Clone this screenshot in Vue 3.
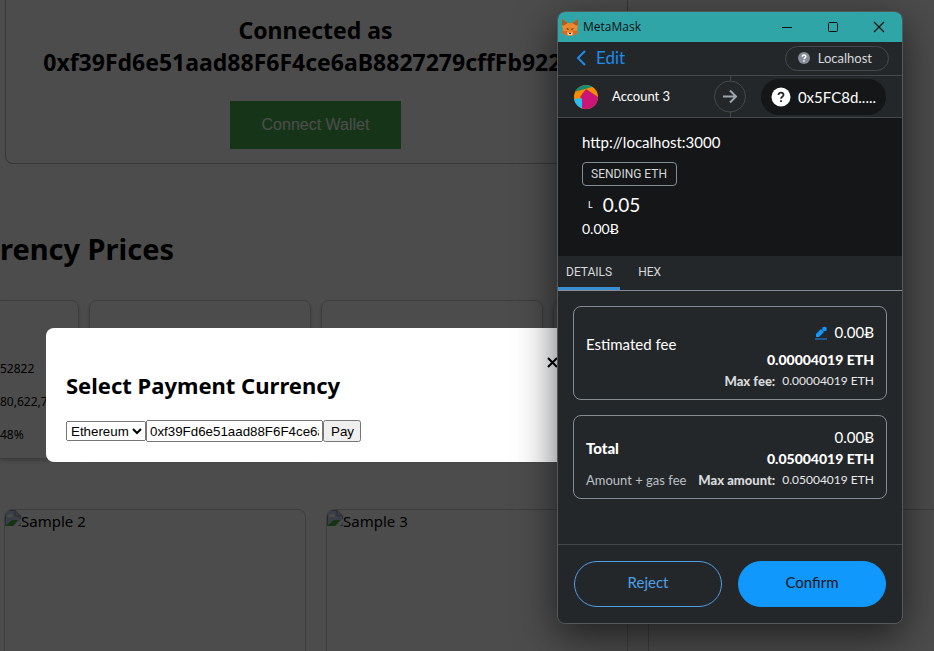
<script setup>
import { ref } from 'vue'

const address = ref('0xf39Fd6e51aad88F6F4ce6aB8827279cffFb92266')
const currency = ref('Ethereum')
const currencies = ['Ethereum', 'Bitcoin']
const samples = ['Sample 2', 'Sample 3', '']
</script>

<template>
  <div class="screen">
    <main class="page">
      <section class="connect">
        <h2>Connected as<br />{{ address }}</h2>
        <button class="wallet" type="button">Connect Wallet</button>
      </section>

      <h1>rency Prices</h1>

      <section class="prices">
        <article class="price first">
          <p>52822</p>
          <p>80,622,7</p>
          <p>48%</p>
        </article>
        <article class="price"></article>
        <article class="price"></article>
        <article class="price"></article>
      </section>

      <section class="samples">
        <figure v-for="(name, i) in samples" :key="i" class="sample">
          <svg v-if="name" width="16" height="16" viewBox="0 0 16 16" aria-hidden="true">
            <path d="M0 0h10l6 6v10H0z" fill="#c3d4ee" />
            <path d="M0 16l7-6h6l-5 6z" fill="#4caf3d" />
            <path d="M9 16l7-7v3l-3 4z" fill="#fff" />
            <path d="M3 7c-2-1 0-3 1-2 1-2 4-1 3 1 2 0 1 1 0 1z" fill="#fff" />
            <path d="M.5 16V.5H10l5.500 5.500V9M10 .5V6h5.500M13 15.500h3" fill="none" stroke="#8a8f98" />
          </svg>
          <figcaption>{{ name }}</figcaption>
        </figure>
      </section>
    </main>

    <div class="overlay">
      <section class="modal">
        <button class="close" type="button" aria-label="Close">
          <svg width="11" height="11" viewBox="0 0 11 11"><path d="M1 1l9 9M10 1l-9 9" stroke="#000" stroke-width="2" /></svg>
        </button>
        <h2>Select Payment Currency</h2>
        <form class="pay" @submit.prevent>
          <select v-model="currency" aria-label="Currency">
            <option v-for="c in currencies" :key="c">{{ c }}</option>
          </select>
          <input v-model="address" type="text" aria-label="Address" />
          <button type="submit">Pay</button>
        </form>
      </section>
    </div>

    <section class="popup">
      <header class="titlebar">
        <svg class="fox" width="18" height="18" viewBox="0 0 18 18" aria-hidden="true">
          <path d="M1 1l6 4h4l6-4v7l-1 4 1 3-4 2-3 1H8l-3-1-4-2 1-3-1-4z" fill="#e8862d" />
          <path d="M1 1l6 4-4 3-2-1zM17 1l-6 4 4 3 2-1z" fill="#a4602f" />
          <path d="M2 8l5-3 1 5-6 2zM16 8l-5-3-1 5 6 2z" fill="#f08a2e" />
          <path d="M1 13h5l1 3-2 1-4-2zM17 13h-5l-1 3 2 1 4-2z" fill="#d9691f" />
          <path d="M5 10l3 1-1 1zM13 10l-3 1 1 1z" fill="#3b2a22" />
          <path d="M6 14l1 3h4l1-3-2 1H8z" fill="#e6d6c6" />
          <path d="M8 15h2v1H8z" fill="#24272a" />
        </svg>
        <span class="name">MetaMask</span>
        <div class="controls">
          <button type="button" aria-label="Minimize"><svg width="12" height="12" viewBox="0 0 12 12"><path d="M1 6.500h10" stroke="#111" /></svg></button>
          <button type="button" aria-label="Maximize"><svg width="12" height="12" viewBox="0 0 12 12"><rect x="1.500" y="1.500" width="9" height="9" rx="1" fill="none" stroke="#111" /></svg></button>
          <button type="button" aria-label="Close window"><svg width="12" height="12" viewBox="0 0 12 12"><path d="M1 1l10 10M11 1L1 11" stroke="#111" stroke-width="1.200" /></svg></button>
        </div>
      </header>

      <div class="editbar">
        <a href="#" class="edit">
          <svg width="10" height="16" viewBox="0 0 10 16" aria-hidden="true"><path d="M9 1L2 8l7 7" fill="none" stroke="#1c8ceb" stroke-width="2" /></svg>
          Edit
        </a>
        <span class="network">
          <svg width="12" height="12" viewBox="0 0 12 12" aria-hidden="true">
            <circle cx="6" cy="6" r="6" fill="#868d99" />
            <path d="M4.300 4.700C4.300 2.500 7.900 2.500 7.800 4.600 7.700 5.900 6 5.700 6 7.200M6 8.200v1.500" fill="none" stroke="#fff" stroke-width="1.500" />
          </svg>
          Localhost
        </span>
      </div>

      <div class="accounts">
        <div class="from">
          <svg width="24" height="24" viewBox="0 0 24 24" aria-hidden="true">
            <defs><clipPath id="jazz"><circle cx="12" cy="12" r="12" /></clipPath></defs>
            <g clip-path="url(#jazz)">
              <path d="M0 0h24v24H0z" fill="#f98c01" />
              <path d="M0 7L18 2V0H0z" fill="#178b72" />
              <path d="M0 14l8-1v11H0z" fill="#24c1f2" />
              <path d="M12 4l12 8v12H8V14L6 12z" fill="#cb1577" />
            </g>
          </svg>
          <span>Account 3</span>
        </div>
        <svg class="arrow" width="34" height="41" viewBox="0 0 34 41" aria-hidden="true">
          <path d="M17.500 0v5M17.500 36v5" stroke="#44484c" />
          <circle cx="17" cy="20.500" r="15.500" fill="none" stroke="#44484c" />
          <path d="M10 20.500h13M17 14.500l6 6-6 6" fill="none" stroke="#9fa6ae" stroke-width="2" />
        </svg>
        <span class="to">
          <svg width="20" height="20" viewBox="0 0 20 20" aria-hidden="true">
            <circle cx="10" cy="10" r="9.500" fill="#fff" />
            <path d="M7.500 8C7.500 4.700 12.700 4.900 12.500 8 12.400 9.900 10 9.600 10 11.800M10 13.200v1.800" fill="none" stroke="#24272a" stroke-width="1.800" />
          </svg>
          0x5FC8d.....
        </span>
      </div>

      <div class="summary">
        <div class="origin">http://localhost:3000</div>
        <div class="action">SENDING ETH</div>
        <div class="amount"><small>L</small>0.05</div>
        <div class="fiat">0.00Ƀ</div>
      </div>

      <nav class="tabs">
        <button class="tab active" type="button">DETAILS</button>
        <button class="tab" type="button">HEX</button>
      </nav>

      <div class="details">
        <section class="box fee">
          <span class="label">Estimated fee</span>
          <div class="values">
            <div class="value">
              <svg width="13" height="14" viewBox="0 0 13 14" aria-hidden="true">
                <path d="M0 13h12" stroke="#1c6db0" stroke-width="1.500" />
                <path d="M1 11V8l5-5 3 3-5 5z" fill="#1098fc" />
                <circle cx="9.500" cy="3" r="2.300" fill="#1098fc" />
              </svg>
              0.00Ƀ
            </div>
            <div class="strong">0.00004019 ETH</div>
            <div class="max"><b>Max fee:</b><span>0.00004019 ETH</span></div>
          </div>
        </section>
        <section class="box total">
          <div class="side">
            <strong>Total</strong>
            <span>Amount + gas fee</span>
          </div>
          <div class="values">
            <div class="value">0.00Ƀ</div>
            <div class="strong">0.05004019 ETH</div>
            <div class="max"><b>Max amount:</b><span>0.05004019 ETH</span></div>
          </div>
        </section>
      </div>

      <footer class="actions">
        <button class="reject" type="button">Reject</button>
        <button class="confirm" type="button">Confirm</button>
      </footer>
    </section>
  </div>
</template>

<style>
body {
  background: #4d4d4d;
}
</style>

<style scoped>
* {
  box-sizing: border-box;
}
.screen {
  position: relative;
  height: 100vh;
  overflow: hidden;
  background: #fff;
  color: #000;
  font-family: "Noto Sans", "Open Sans", sans-serif;
  font-size: 15px;
}
h1,
h2,
p,
figure {
  margin: 0;
}
h2 {
  font-size: 23px;
  line-height: 32px;
}
.connect {
  display: flex;
  flex-direction: column;
  align-items: center;
  gap: 23px;
  width: 623px;
  margin-left: 5px;
  padding: 14px 20px 14px 18px;
  border: 1px solid #bbb;
  border-top: 0;
  border-radius: 0 0 8px 8px;
  text-align: center;
}
.wallet {
  padding: 15px 32px;
  border: 0;
  background: #4caf50;
  color: #fff;
  font: 16px/18px "Liberation Sans", sans-serif;
}
h1 {
  margin-top: 63px;
  font-size: 29px;
  line-height: 44px;
}
.prices {
  display: flex;
  gap: 10px;
  margin-top: 29px;
}
.price {
  flex: 0 0 222px;
  height: 159px;
  border: 1px solid #ccc;
  border-radius: 8px;
  box-shadow: 0 2px 4px rgba(0, 0, 0, 0.2);
}
.price.first {
  display: flex;
  flex-direction: column;
  flex-basis: 79px;
  gap: 13px;
  padding-top: 58px;
  border-left: 0;
  border-radius: 0 8px 8px 0;
  font-size: 12px;
  line-height: 20px;
}
.samples {
  display: flex;
  gap: 20px;
  margin: 50px 0 0 4px;
}
.sample {
  display: flex;
  flex: 0 0 302px;
  height: 400px;
  border: 1px solid #ccc;
  border-radius: 8px;
  overflow: hidden;
  line-height: 22px;
}
.overlay {
  position: absolute;
  inset: 0;
  padding: 328px 46px 0;
  background: rgba(0, 0, 0, 0.7);
}
.modal {
  display: flex;
  flex-direction: column;
  gap: 19px;
  position: relative;
  max-width: 532px;
  padding: 41px 20px 20px;
  border-radius: 8px;
  background: #fff;
}
.modal h2 {
  font-size: 22px;
}
.close {
  position: absolute;
  top: 29px;
  right: 20px;
  display: flex;
  padding: 0;
  border: 0;
  background: none;
}
.pay {
  display: flex;
  align-items: center;
}
.pay select,
.pay input,
.pay button {
  font-family: "Liberation Sans", sans-serif;
}
.pay select {
  width: 80px;
  height: 20px;
  color: #000;
}
.pay input {
  width: 177px;
  height: 22px;
}
.pay button {
  width: 38px;
  height: 22px;
}
.popup {
  position: absolute;
  top: 11px;
  left: 557px;
  display: flex;
  flex-direction: column;
  width: 346px;
  height: 613px;
  border: 1px solid #55585a;
  border-radius: 8px;
  overflow: hidden;
  background: #24272a;
  box-shadow: 0 12px 40px rgba(0, 0, 0, 0.6);
  color: #fff;
  font-family: Lato, sans-serif;
}
.titlebar {
  display: flex;
  align-items: center;
  flex: 0 0 30px;
  gap: 4px;
  padding-left: 3px;
  background: #30a5a7;
  color: #111;
}
.name {
  padding-bottom: 1px;
  font-family: "Open Sans", sans-serif;
  font-size: 12px;
}
.controls {
  display: flex;
  margin-left: auto;
}
.controls button {
  display: flex;
  justify-content: center;
  width: 46px;
  padding: 0;
  border: 0;
  background: none;
}
.editbar {
  display: flex;
  align-items: center;
  justify-content: space-between;
  flex: 0 0 34px;
  padding: 0 13px 1px 18px;
  border-bottom: 1px solid #44484c;
}
.edit {
  display: flex;
  align-items: center;
  gap: 10px;
  color: #1c8ceb;
  font-size: 17px;
  line-height: 20px;
  text-decoration: none;
}
.network {
  display: flex;
  align-items: center;
  gap: 8px;
  height: 25px;
  padding: 0 16px 0 12px;
  border: 1px solid #44484c;
  border-radius: 13px;
  color: #d6d9dc;
  font-size: 13px;
}
.accounts {
  display: flex;
  align-items: center;
  flex: 0 0 42px;
  padding: 0 16px;
  border-bottom: 1px solid #44484c;
}
.from {
  display: flex;
  align-items: center;
  flex: 1;
  gap: 14px;
  font-size: 13px;
}
.from span {
  padding-bottom: 2px;
}
.arrow {
  margin-right: 14px;
}
.to {
  display: flex;
  align-items: center;
  gap: 7px;
  height: 36px;
  padding: 0 10px;
  border-radius: 18px;
  background: #141618;
  font-size: 15px;
}
.summary {
  display: flex;
  flex-direction: column;
  align-items: flex-start;
  flex: 0 0 138px;
  padding: 14px 24px 0;
  background: #141618;
  font-size: 15px;
  line-height: 20px;
}
.action {
  margin-top: 10px;
  padding: 0 9px 0 8px;
  border: 1px solid #848c96;
  border-radius: 4px;
  color: #d6d9dc;
  font: 12px/22px Roboto, sans-serif;
}
.amount {
  display: flex;
  align-items: center;
  gap: 10px;
  margin-top: 7px;
  padding-left: 6px;
  font-size: 19px;
  line-height: 24px;
}
.amount small {
  font-size: 9px;
}
.fiat {
  margin-top: 2px;
  font-size: 14px;
}
.tabs {
  display: flex;
  flex: 0 0 34px;
  border-bottom: 1px solid #848c96;
}
.tab {
  height: 34px;
  padding: 0 8px;
  border: 0;
  border-bottom: 3px solid transparent;
  background: none;
  color: #d6d9dc;
  font: 12px/14px Roboto, sans-serif;
}
.tab + .tab {
  margin-left: 10px;
}
.tab.active {
  border-color: #3a8fd0;
}
.details {
  display: flex;
  flex-direction: column;
  flex: 1;
  gap: 15px;
  padding: 15px;
}
.box {
  display: flex;
  justify-content: space-between;
  padding: 11px 12px 9px;
  border: 1px solid #848c96;
  border-radius: 8px;
}
.fee {
  padding-top: 15px;
}
.label {
  margin-top: 12px;
  font-size: 15px;
  line-height: 20px;
}
.values {
  display: flex;
  flex-direction: column;
  align-items: flex-end;
}
.value {
  display: flex;
  gap: 7px;
  font-size: 15px;
  line-height: 20px;
}
.value svg {
  margin-top: 4px;
}
.strong {
  font-size: 14px;
  font-weight: 900;
  line-height: 24px;
}
.fee .strong {
  margin-top: 6px;
}
.max {
  display: flex;
  gap: 7px;
  color: #e6e8ea;
  font-size: 12px;
  line-height: 18px;
}
.max b {
  color: #d6d9dc;
  font-size: 13px;
  font-weight: 900;
}
.side {
  display: flex;
  flex-direction: column;
  justify-content: flex-end;
  gap: 13px;
  font-size: 14px;
  line-height: 20px;
}
.side strong {
  font-size: 15px;
  font-weight: 900;
}
.side span {
  color: #bbc0c5;
  font-size: 13px;
  line-height: 18px;
}
.actions {
  display: flex;
  gap: 16px;
  padding: 16px;
  border-top: 1px solid #44484c;
}
.actions button {
  flex: 1;
  height: 46px;
  padding: 0 0 4px;
  border: 1px solid #4ba0e8;
  border-radius: 23px;
  background: none;
  color: #4ba0e8;
  font: 15px/20px Lato, sans-serif;
}
.actions .confirm {
  border-color: #1098fc;
  background: #1098fc;
  color: #141618;
}
</style>
